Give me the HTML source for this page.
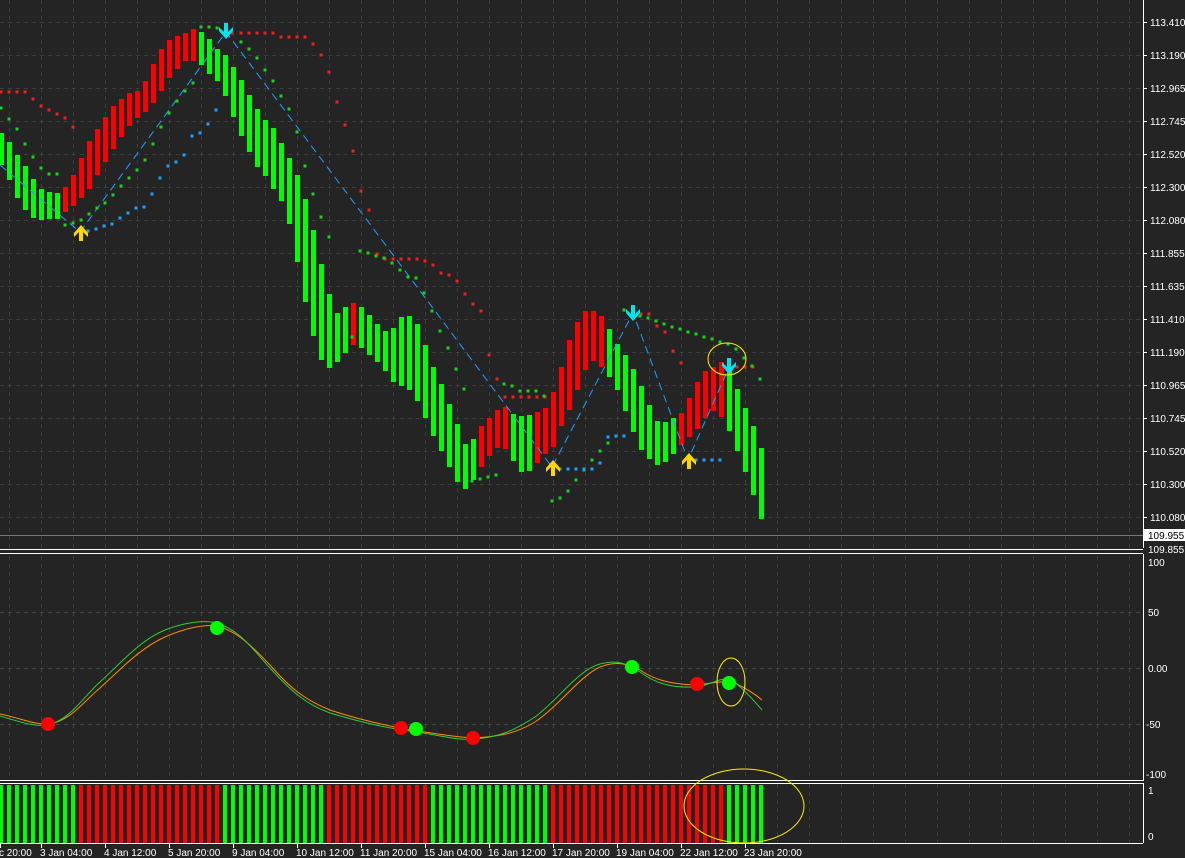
<!DOCTYPE html><html><head><meta charset="utf-8"><style>
html,body{margin:0;padding:0;background:#242424;width:1185px;height:858px;overflow:hidden}
svg{display:block}
text{font-family:"Liberation Sans",sans-serif;font-size:10px;fill:#fff}
</style></head><body>
<svg id="s" width="1185" height="858" xmlns="http://www.w3.org/2000/svg"></svg>
<script>
const s=document.getElementById('s');let h='';
for(let x=9;x<1143;x+=32){h+=`<line x1="${x+.5}" y1="0" x2="${x+.5}" y2="548" stroke="#3c3c3c" stroke-dasharray="4,4"/><line x1="${x+.5}" y1="556" x2="${x+.5}" y2="781" stroke="#3c3c3c" stroke-dasharray="4,4"/><line x1="${x+.5}" y1="784" x2="${x+.5}" y2="843" stroke="#3c3c3c" stroke-dasharray="4,4"/>`;}
const pl=['113.410','113.190','112.965','112.745','112.520','112.300','112.080','111.855','111.635','111.410','111.190','110.965','110.745','110.520','110.300','110.080'];
pl.forEach((t,k)=>{const y=22+33*k;h+=`<line x1="0" y1="${y+.5}" x2="1143" y2="${y+.5}" stroke="#3c3c3c" stroke-dasharray="4,4"/><line x1="1143" y1="${y+.5}" x2="1147" y2="${y+.5}" stroke="#fff"/><text x="1150" y="${y+4}">${t}</text>`;});
[612,668,724].forEach(y=>h+=`<line x1="0" y1="${y+.5}" x2="1143" y2="${y+.5}" stroke="#2f4f4f" stroke-dasharray="4,4"/>`);
const B=[[0,'G',133,165],[1,'G',142,180],[2,'G',155,198],[3,'G',166,210],[4,'G',179,218],[5,'G',189,220],[6,'G',192,219],[7,'G',193,219],[8,'R',187,212],[9,'R',175,206],[10,'R',158,198],[11,'R',141,189],[12,'R',129,175],[13,'R',117,162],[14,'R',106,149],[15,'R',99,137],[16,'R',93,126],[17,'R',91,118],[18,'R',81,112],[19,'R',64,103],[20,'R',49,91],[21,'R',40,78],[22,'R',36,69],[23,'R',33,61],[24,'R',29,61],[25,'G',32,65],[26,'G',39,74],[27,'G',49,81],[28,'G',55,96],[29,'G',67,117],[30,'G',80,136],[31,'G',95,152],[32,'G',109,167],[33,'G',120,176],[34,'G',128,189],[35,'G',143,201],[36,'G',158,224],[37,'G',175,262],[38,'G',199,302],[39,'G',230,336],[40,'G',264,360],[41,'G',294,368],[42,'G',313,362],[43,'G',307,353],[44,'R',303,345],[45,'G',307,348],[46,'G',315,355],[47,'G',324,362],[48,'G',331,371],[49,'G',328,382],[50,'G',317,386],[51,'G',316,390],[52,'G',324,401],[53,'G',345,418],[54,'G',367,436],[55,'G',384,451],[56,'G',404,467],[57,'G',424,482],[58,'G',444,489],[59,'G',439,480],[60,'R',426,467],[61,'R',418,456],[62,'R',410,448],[63,'R',407,449],[64,'G',414,461],[65,'G',416,472],[66,'G',415,471],[67,'R',412,463],[68,'R',408,454],[69,'R',392,447],[70,'R',367,426],[71,'R',340,410],[72,'R',322,390],[73,'R',311,370],[74,'R',311,361],[75,'R',316,367],[76,'G',329,377],[77,'G',344,390],[78,'G',355,411],[79,'G',369,432],[80,'G',386,450],[81,'G',405,459],[82,'G',421,465],[83,'G',422,462],[84,'G',418,454],[85,'R',413,445],[86,'R',398,437],[87,'R',382,429],[88,'R',371,418],[89,'R',367,411],[90,'R',362,417],[91,'G',371,431],[92,'G',389,451],[93,'G',408,472],[94,'G',426,495],[95,'G',448,519]];
B.forEach(([i,c,a,b])=>{h+=`<rect x="${8*i-1}" y="${a}" width="5" height="${b-a}" fill="${c=='G'?'#00ff00':'#ff0000'}"/>`;});
h+=`<polyline points="0,165 80,232 226,32 552,467 633,313 688,460 730,365" fill="none" stroke="#1ea0ff" stroke-dasharray="8,5"/>`;
function dots(arr,col){arr.forEach(p=>h+=`<rect x="${p[0]-1.5}" y="${p[1]-1.5}" width="3" height="3" fill="${col}"/>`);}
dots([[1,92],[9,92],[17,92],[25,92],[33,99],[41,106],[49,110],[57,114],[65,118],[73,127],[232,33],[241,33],[249,33],[257,33],[265,33],[273,33],[281,37],[289,37],[297,37],[305,37],[313,44],[321,55],[329,72],[337,102],[345,125],[353,151],[361,191],[369,210],[377,254],[385,259],[393,259],[401,259],[409,259],[417,259],[425,261],[433,265],[441,273],[449,275],[457,281],[465,294],[473,304],[481,311],[489,355],[497,379],[505,397],[513,397],[521,397],[529,397],[537,397],[545,397],[641,314],[649,314],[657,326],[665,332],[673,351],[681,363],[737,367],[745,367],[753,367]],'#ff1a1a');
dots([[1,108],[9,119],[17,129],[25,144],[33,157],[41,168],[49,174],[57,174],[65,225],[73,223],[81,220],[89,214],[97,208],[105,203],[113,195],[121,186],[129,178],[137,170],[145,160],[153,144],[161,127],[169,113],[177,101],[185,91],[193,83],[201,27],[209,27],[217,28],[241,42],[249,49],[257,58],[265,70],[273,81],[281,96],[289,109],[297,132],[305,166],[313,194],[321,217],[329,237],[352,337],[360,251],[368,253],[376,256],[384,258],[392,263],[400,270],[408,277],[416,278],[424,293],[432,311],[440,331],[448,348],[456,369],[464,389],[472,481],[480,479],[488,477],[496,475],[504,384],[512,386],[520,391],[528,391],[536,391],[544,396],[552,501],[560,498],[568,491],[576,480],[584,470],[592,460],[600,451],[608,443],[624,310],[640,316],[648,318],[656,321],[664,324],[672,327],[680,329],[688,332],[696,334],[704,337],[712,339],[720,342],[728,344],[736,349],[744,358],[752,366],[760,379]],'#16d416');
dots([[88,231],[96,229],[104,226],[112,224],[120,218],[128,213],[136,208],[144,207],[152,194],[160,178],[168,166],[176,162],[184,155],[192,136],[200,133],[208,124],[216,110],[560,469],[568,469],[576,469],[584,469],[592,469],[600,463],[608,437],[616,436],[624,436],[696,460],[704,460],[712,460],[720,460]],'#1ea0ff');
function up(x,y){h+=`<path d="M${x},${y-9} L${x+7},${y-1} L${x+7},${y+3} L${x+2},${y-2} L${x+2},${y+7} L${x-2},${y+7} L${x-2},${y-2} L${x-7},${y+3} L${x-7},${y-1}Z" fill="#ffd700"/>`;}
function dn(x,y){h+=`<path d="M${x},${y+8} L${x+7},${y} L${x+7},${y-4} L${x+2},${y+1} L${x+2},${y-8} L${x-2},${y-8} L${x-2},${y+1} L${x-7},${y-4} L${x-7},${y}Z" fill="#00e5ee"/>`;}
up(81,234);up(553,469);up(689,462);dn(226,31);dn(633,313);dn(729,366);
h+=`<ellipse cx="727" cy="359" rx="19" ry="16" fill="none" stroke="#ffee00"/>`;
h+=`<line x1="1143.5" y1="0" x2="1143.5" y2="548" stroke="#fff"/><line x1="0" y1="549.5" x2="1143" y2="549.5" stroke="#fff"/><line x1="0" y1="553.5" x2="1143" y2="553.5" stroke="#fff"/><line x1="1143.5" y1="554" x2="1143.5" y2="781" stroke="#fff"/><line x1="0" y1="780.5" x2="1143" y2="780.5" stroke="#fff"/><line x1="0" y1="783.5" x2="1143" y2="783.5" stroke="#fff"/><line x1="1143.5" y1="783" x2="1143.5" y2="843" stroke="#fff"/><line x1="0" y1="843.5" x2="1143" y2="843.5" stroke="#fff"/>`;
h+=`<line x1="0" y1="535.5" x2="1143" y2="535.5" stroke="#777"/><rect x="1144" y="529" width="41" height="12" fill="#fff"/><text x="1148" y="539" style="fill:#000">109.955</text><text x="1148" y="553">109.855</text>`;
[['100',562],['50',612],['0.00',668],['-50',724],['-100',774]].forEach(([t,y])=>h+=`<text x="${t[0]=='-'?1146:1148}" y="${y+4}">${t}</text>`);
h+=`<text x="1148" y="794">1</text><text x="1148" y="840">0</text>`;
h+=`<path d="M0,714 C20,718 35,725 48,724 C70,722 85,700 100,688 C120,670 140,648 165,637 C185,628 205,624 217,626 C240,632 255,650 270,665 C290,688 305,700 330,710 C360,720 385,725 410,730 C440,734 460,738 475,738 C500,736 515,734 535,722 C560,705 580,676 600,667 C615,661 625,663 640,670 C655,680 670,684 695,685 C710,684 720,680 735,683 C745,688 755,694 762,700" fill="none" stroke="#ff8c00"/>`;
h+=`<path d="M0,716 C20,722 35,727 48,725 C70,720 85,695 100,682 C120,664 140,640 165,630 C185,622 205,620 217,623 C240,630 255,652 270,668 C290,690 305,704 330,713 C360,722 385,728 410,731 C440,735 458,741 475,739 C500,737 515,730 535,717 C560,698 578,670 600,664 C615,660 625,662 640,672 C655,683 670,688 695,687 C710,686 720,676 732,680 C745,690 755,702 762,710" fill="none" stroke="#32cd32"/>`;
[[48,724,'#ff0000'],[401,728,'#ff0000'],[473,738,'#ff0000'],[697,684,'#ff0000'],[217,628,'#00ff00'],[416,729,'#00ff00'],[632,667,'#00ff00'],[729,683,'#00ff00']].forEach(([x,y,c])=>h+=`<circle cx="${x}" cy="${y}" r="7" fill="${c}"/>`);
h+=`<ellipse cx="731" cy="682" rx="14" ry="24" fill="none" stroke="#ffee00"/>`;
for(let i=0;i<=95;i++){const r=(i>=10&&i<=27)||(i>=41&&i<=53)||(i>=69&&i<=90);h+=`<rect x="${8*i-1}" y="785" width="4" height="58" fill="${r?'#ff0000':'#00ff00'}"/>`;}
h+=`<ellipse cx="744" cy="806" rx="60" ry="37" fill="none" stroke="#ffee00"/>`;
[['c 20:00',-1],['3 Jan 04:00',40],['4 Jan 12:00',104],['5 Jan 20:00',168],['9 Jan 04:00',232],['10 Jan 12:00',296],['11 Jan 20:00',360],['15 Jan 04:00',424],['16 Jan 12:00',488],['17 Jan 20:00',552],['19 Jan 04:00',616],['22 Jan 12:00',680],['23 Jan 20:00',744]].forEach(([t,x])=>{h+=`<line x1="${x+1.5}" y1="844" x2="${x+1.5}" y2="848" stroke="#fff"/><text x="${x}" y="856">${t}</text>`;});
s.innerHTML=h;
</script></body></html>
